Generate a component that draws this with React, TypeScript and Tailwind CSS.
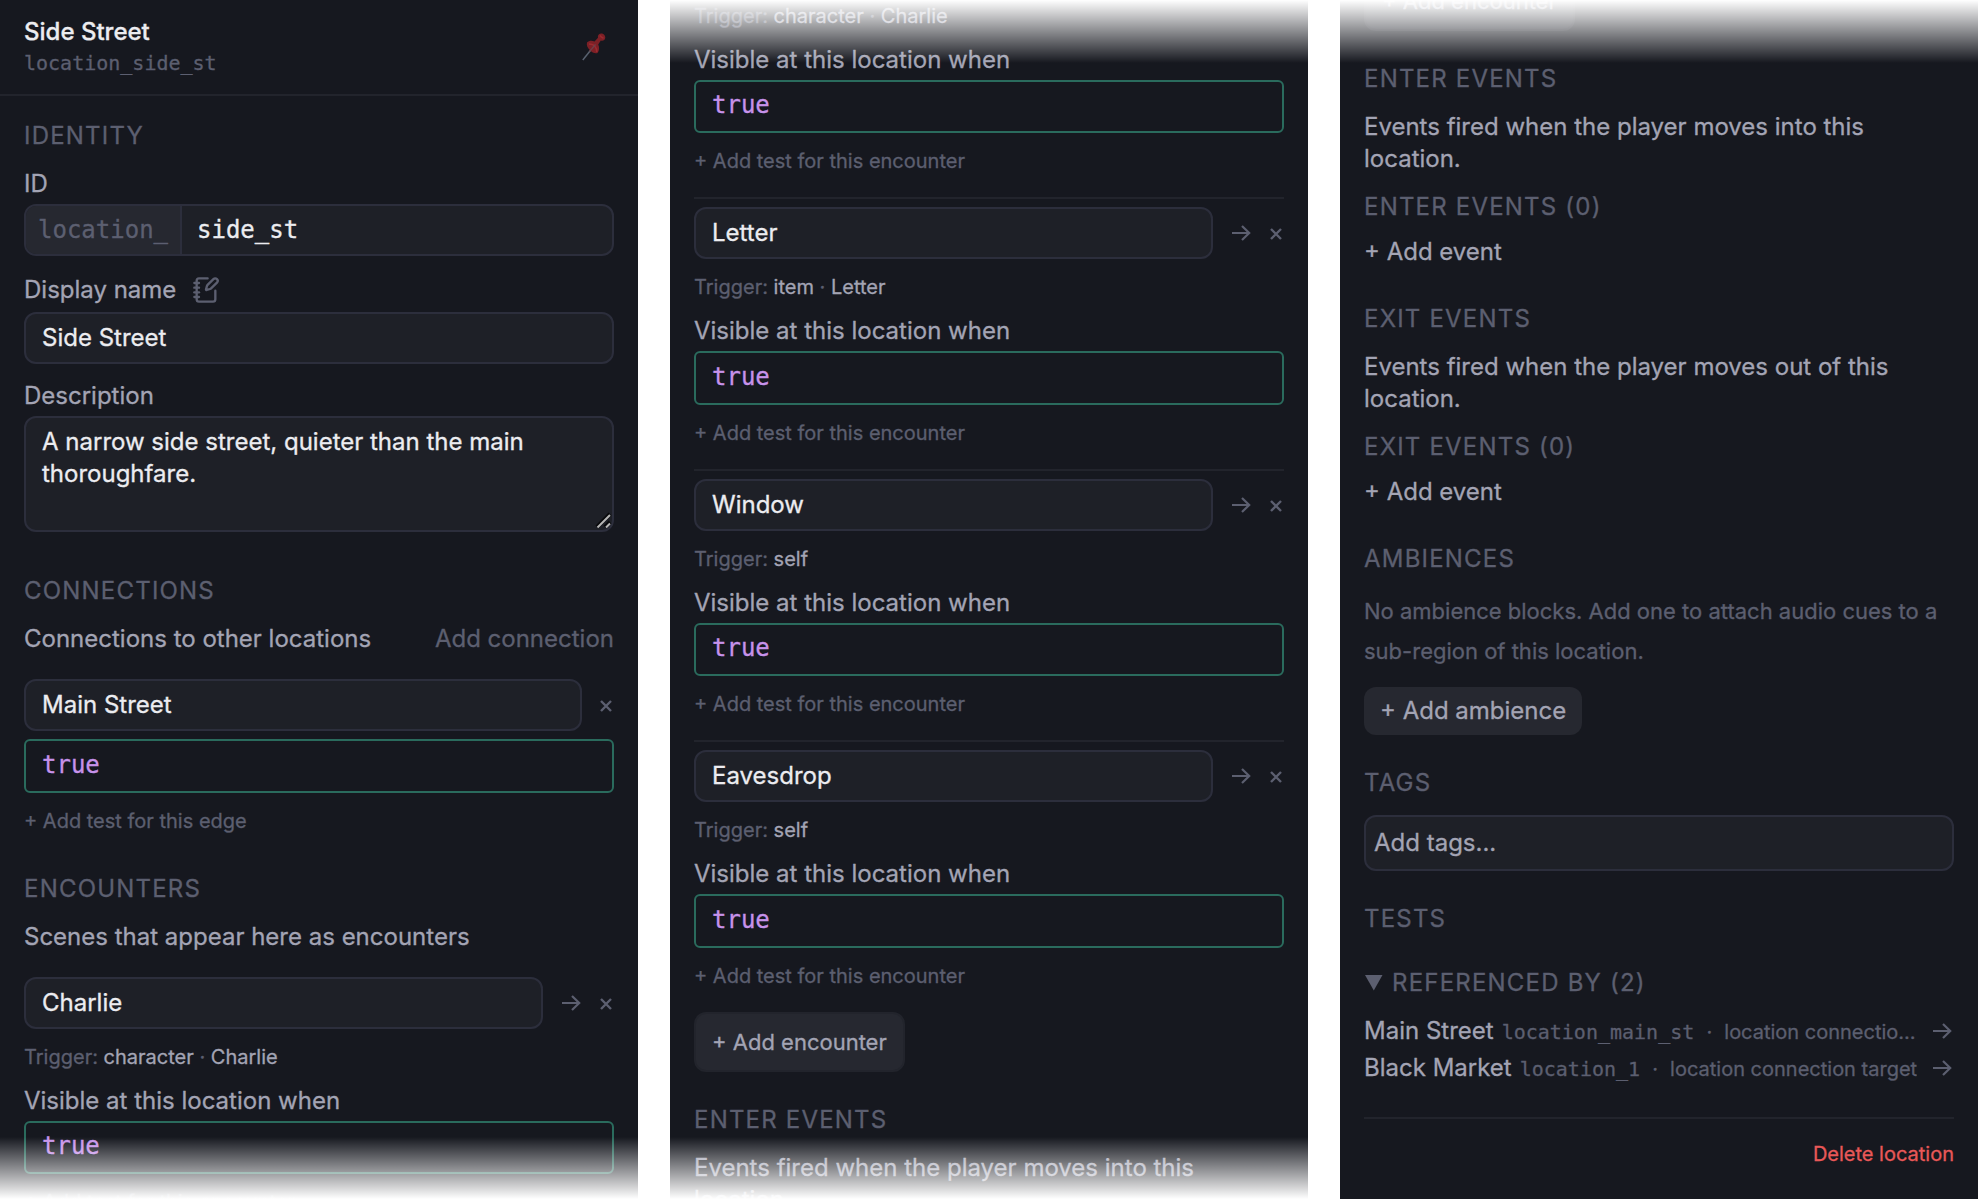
import { type ReactNode } from "react";
import { NotebookPen } from "lucide-react";

type Encounter = {
  name: string;
  kind: string;
  target?: string;
};

const encounters: Encounter[] = [
  { name: "Letter", kind: "item", target: "Letter" },
  { name: "Window", kind: "self" },
  { name: "Eavesdrop", kind: "self" },
];

const references = [
  { name: "Main Street", id: "location_main_st", relation: "location connection target" },
  { name: "Black Market", id: "location_1", relation: "location connection target" },
];

const Panel = ({ children }: { children: ReactNode }) => (
  <section className="relative h-[1199px] w-[638px] shrink-0 overflow-hidden bg-[#16181f]">
    {children}
  </section>
);

const FadeTop = () => (
  <div className="absolute inset-x-0 top-0 h-[63px] bg-linear-to-b from-white to-white/0" />
);

const FadeBottom = () => (
  <div className="absolute inset-x-0 bottom-0 h-[62px] bg-linear-to-t from-white to-white/0" />
);

const Heading = ({ children }: { children: ReactNode }) => (
  <h2 className="h-8 text-2xl leading-8 tracking-[0.05em] text-[#5c5f70] uppercase">{children}</h2>
);

const Field = ({ children }: { children: ReactNode }) => (
  <div className="flex h-[52px] min-w-0 flex-1 items-center rounded-xl border-2 border-[#2c2e3c] bg-[#1e2027] px-4 text-2xl text-[#ececf0]">
    {children}
  </div>
);

const Condition = () => (
  <div className="flex h-[53.5px] items-center rounded-md border-2 border-[#2a6b5d] px-4 pb-[2px] font-['DejaVu_Sans_Mono',monospace] text-2xl text-[#c792ea]">
    true
  </div>
);

const Arrow = () => (
  <svg className="shrink-0" width="19" height="16" viewBox="0 0 19 16" fill="none" stroke="currentColor" strokeWidth="2.2">
    <path d="M0 8h17.5M10 1l7.2 7L10 15" />
  </svg>
);

const RemoveIcon = () => (
  <svg className="shrink-0" width="12" height="12" viewBox="0 0 12 12" fill="none" stroke="currentColor" strokeWidth="2.4">
    <path d="M1 1l10 10M11 1L1 11" />
  </svg>
);

const AddTest = ({ target }: { target: string }) => (
  <button className="mt-3 block h-8 text-xl leading-8 text-[#5c5f70]">+ Add test for this {target}</button>
);

const AddEncounter = () => (
  <button className="block h-[60px] rounded-xl border-2 border-[#22242c] bg-[#262830] px-4 pt-[2px] text-[22px] text-[#a3a4b4]">
    + Add encounter
  </button>
);

const TriggerInfo = ({ kind, target }: { kind: string; target?: string }) => (
  <>
    <p className="h-8 text-xl leading-8 text-[#5c5f70]">
      Trigger: <span className="text-[#a3a4b4]">{kind}</span>
      {target && (
        <>
          {" · "}
          <span className="text-[#a3a4b4]">{target}</span>
        </>
      )}
    </p>
    <p className="mt-3 mb-1 h-8 leading-8">Visible at this location when</p>
    <Condition />
    <AddTest target="encounter" />
  </>
);

const EncounterRow = ({ name }: { name: string }) => (
  <div className="mb-3 flex items-center text-[#5c5f70]">
    <Field>{name}</Field>
    <button className="ml-[19px]">
      <Arrow />
    </button>
    <button className="mr-[2px] ml-[19px] pt-[2px]">
      <RemoveIcon />
    </button>
  </div>
);

const Pin = () => (
  <svg className="h-7 w-6" viewBox="0 0 24 28" fill="none">
    <path d="M0.8 27L12 13" stroke="#596270" strokeWidth="1.5" />
    <path
      d="M5 9.500C7 7.500 10 7.500 12.500 8.500L16 4.800C15.500 2.500 16.500.5 18.800.4C21.500.3 23.500 2.300 23.300 4.800C23.100 7.200 21 8.200 18.800 7.600L16.200 11.500C17.500 14 17.500 17.500 15.500 20C13 20.800 10 19.500 8 17.200C5.800 15 4.200 12.500 5 9.500Z"
      fill="#7d2026"
    />
    <path d="M7 11c2.500 0 5 1.200 6 2.500 1.200 1.500 2 3.500 1.800 5.500M18 2.500c1 1.500 2 2.200 3.500 2.800" stroke="#9c2a30" strokeWidth="1.500" />
    <path d="M7.500 18.500L13.500 11.500" stroke="#6d4048" strokeWidth="1.300" />
  </svg>
);

const Details = () => (
  <Panel>
    <header className="flex h-24 items-center justify-between border-b-2 border-[#22242c] pr-[32px] pl-6">
      <div>
        <h1 className="h-[31px] text-2xl leading-[31px] font-medium text-[#ececf0]">Side Street</h1>
        <p className="h-[31px] font-['DejaVu_Sans_Mono',monospace] text-xl leading-[33px] text-[#5c5f70]">location_side_st</p>
      </div>
      <Pin />
    </header>
    <div className="px-6 pt-6">
      <Heading>Identity</Heading>
      <p className="mt-4 mb-1 h-8 leading-8">ID</p>
      <div className="flex h-[52px] overflow-hidden rounded-xl border-2 border-[#2c2e3c] bg-[#1e2027] font-['DejaVu_Sans_Mono',monospace] text-2xl leading-[48px]">
        <span className="w-[156px] border-r-2 border-[#2c2e3c] bg-[#262830] pl-3 text-[#5c5f70]">location_</span>
        <span className="pl-[15px] text-[#ececf0]">side_st</span>
      </div>
      <div className="mt-[18px] mb-[6px] flex h-8 items-center gap-4">
        <span>Display name</span>
        <NotebookPen size={28} strokeWidth={2} className="text-[#5c5f70]" />
      </div>
      <Field>Side Street</Field>
      <p className="mt-4 mb-1 h-8 leading-8">Description</p>
      <div className="relative h-[116px] rounded-xl border-2 border-[#2c2e3c] bg-[#1e2027] px-4 py-2 leading-8 text-[#ececf0]">
        A narrow side street, quieter than the main thoroughfare.
        <svg className="absolute right-0 bottom-0" width="18" height="18" viewBox="0 0 18 18">
          <path d="M3 15L16 2M11 15l5-5" stroke="#08090b" strokeWidth="4" />
          <path d="M3.5 15.5L16 3M12 15.5l4-4" stroke="#b5b5b5" strokeWidth="2" />
        </svg>
      </div>
      <div className="mt-[43px]">
        <Heading>Connections</Heading>
      </div>
      <div className="mt-4 flex justify-between leading-8">
        <span>Connections to other locations</span>
        <button className="text-[#5c5f70]">Add connection</button>
      </div>
      <div className="mt-6 mb-2 flex items-center text-[#5c5f70]">
        <Field>Main Street</Field>
        <button className="mr-[2px] ml-[18px] pt-[2px]">
          <RemoveIcon />
        </button>
      </div>
      <Condition />
      <AddTest target="edge" />
      <div className="mt-9">
        <Heading>Encounters</Heading>
      </div>
      <p className="mt-4 mb-6 leading-8">Scenes that appear here as encounters</p>
      <EncounterRow name="Charlie" />
      <TriggerInfo kind="character" target="Charlie" />
    </div>
    <FadeBottom />
  </Panel>
);

const Encounters = () => (
  <Panel>
    <div className="-mt-[0.5px] px-6">
      <TriggerInfo kind="character" target="Charlie" />
      {encounters.map((encounter) => (
        <div key={encounter.name} className="mt-5 border-t-2 border-[#22242c] pt-2">
          <EncounterRow name={encounter.name} />
          <TriggerInfo kind={encounter.kind} target={encounter.target} />
        </div>
      ))}
      <div className="mt-5 mb-8">
        <AddEncounter />
      </div>
      <Heading>Enter events</Heading>
      <p className="mt-4 leading-8">Events fired when the player moves into this location.</p>
    </div>
    <FadeTop />
    <FadeBottom />
  </Panel>
);

const EventSection = ({ name, description }: { name: string; description: string }) => (
  <div className="mb-[35px]">
    <Heading>{name}</Heading>
    <p className="my-4 leading-8">{description}</p>
    <Heading>{name} (0)</Heading>
    <button className="mt-[13px] block h-8 leading-8">+ Add event</button>
  </div>
);

const Events = () => (
  <Panel>
    <div className="-mt-[29px] px-6">
      <div className="mb-8">
        <AddEncounter />
      </div>
      <EventSection name="Enter events" description="Events fired when the player moves into this location." />
      <EventSection name="Exit events" description="Events fired when the player moves out of this location." />
      <Heading>Ambiences</Heading>
      <p className="mt-4 text-[22px] leading-10 text-[#5c5f70]">
        No ambience blocks. Add one to attach audio cues to a sub-region of this location.
      </p>
      <button className="mt-4 mb-8 block h-12 rounded-xl bg-[#262830] px-4 text-[#a3a4b4]">+ Add ambience</button>
      <Heading>Tags</Heading>
      <div className="mt-4 mb-8 flex h-14 items-center rounded-xl border-2 border-[#2c2e3c] bg-[#1e2027] px-2">
        Add tags...
      </div>
      <Heading>Tests</Heading>
      <div className="mt-8 mb-[13px] flex items-center gap-[9px] text-[#5c5f70]">
        <svg width="19" height="16" viewBox="0 0 19 16" fill="currentColor">
          <path d="M1 0h17.5L9.8 15.5z" />
        </svg>
        <Heading>Referenced by (2)</Heading>
      </div>
      {references.map((ref) => (
        <div key={ref.id} className="flex h-[37px] items-center text-[#5c5f70]">
          <div className="flex min-w-0 flex-1 items-baseline">
            <span className="mr-2 shrink-0 text-[#a3a4b4]">{ref.name}</span>
            <span className="shrink-0 font-['DejaVu_Sans_Mono',monospace] text-xl">{ref.id}</span>
            <span className="w-[30px] shrink-0 text-center text-xl">·</span>
            <span className="truncate text-xl">{ref.relation}</span>
          </div>
          <span className="mr-[2px] ml-[13px]">
            <Arrow />
          </span>
        </div>
      ))}
      <div className="mt-[31px] flex justify-end border-t-2 border-[#22242c] pt-[19px]">
        <button className="text-xl leading-8 text-[#e95858]">Delete location</button>
      </div>
    </div>
    <FadeTop />
  </Panel>
);

const App = () => {
  return (
    <main className="flex h-[1201px] w-[1978px] gap-8 overflow-hidden bg-white font-['Inter',sans-serif] text-2xl text-[#a3a4b4] [-webkit-text-stroke:0.3px]">
      <Details />
      <Encounters />
      <Events />
    </main>
  );
};

export default App;
